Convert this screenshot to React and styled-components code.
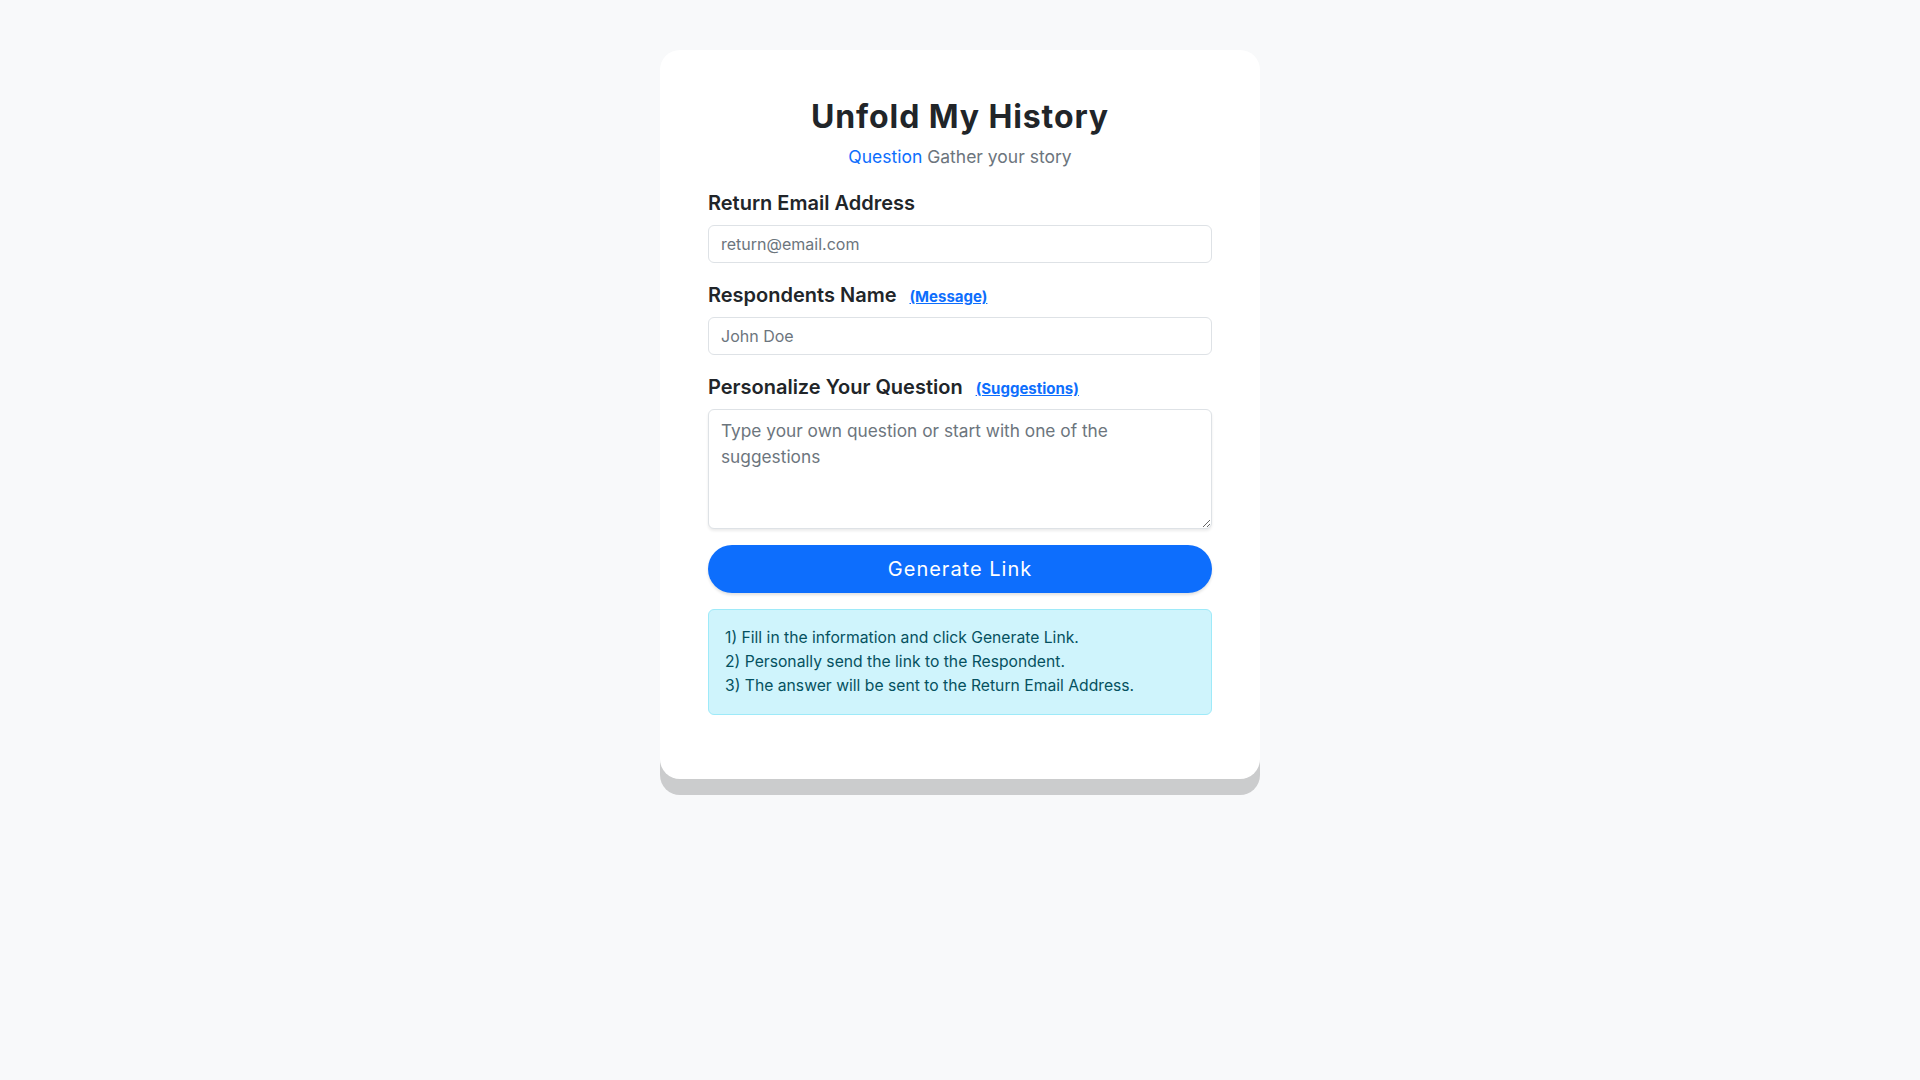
import { createGlobalStyle, styled } from "styled-components";

const GlobalStyle = createGlobalStyle`
  * { box-sizing: border-box; }
  body {
    margin: 0;
    background: #f8f9fa;
    font-family: Inter, "Noto Sans", sans-serif;
    color: #212529;
  }
`;

const Page = styled.div`
  display: flex;
  justify-content: center;
  padding-top: 50px;
  min-height: 1080px;
`;

const Card = styled.div`
  width: 600px;
  align-self: flex-start;
  background: #fff;
  border-radius: 20px;
  padding: 48px 48px 64px;
  box-shadow: 0 16px 0 #cbcccd;
`;

const Header = styled.div`
  text-align: center;
  margin-bottom: 20px;
`;

const Title = styled.h1`
  margin: 0 0 8px;
  font-size: 32px;
  line-height: 1.2;
  font-weight: 700;
  letter-spacing: 0.9px;
  color: #212529;
`;

const Subtitle = styled.p`
  margin: 0;
  font-size: 17.5px;
  line-height: 1.5;
  color: #6c757d;
`;

const Accent = styled.span`
  color: #0d6efd;
`;

const Field = styled.div`
  margin-bottom: ${(p) => (p.$last ? "16px" : "19.5px")};
`;

const Label = styled.label`
  display: flex;
  align-items: baseline;
  gap: 13px;
  margin-bottom: 10.5px;
  font-size: 20px;
  line-height: 24px;
  font-weight: 600;
  color: #212529;
`;

const HelpLink = styled.a`
  font-size: 15px;
  line-height: 1;
  font-weight: 700;
  color: #0d6efd;
  text-decoration: underline;
  cursor: pointer;
`;

const Input = styled.input`
  display: block;
  width: 100%;
  height: 38px;
  padding: 6px 12px;
  font-family: inherit;
  font-size: 16px;
  color: #212529;
  background: #fff;
  border: 1px solid #dee2e6;
  border-radius: 6px;
  outline: none;
  &::placeholder { color: #6c757d; }
`;

const TextArea = styled.textarea`
  display: block;
  width: 100%;
  height: 120px;
  padding: 8px 12px;
  font-family: inherit;
  font-size: 17.3px;
  line-height: 25.7px;
  color: #212529;
  background: #fff;
  border: 1px solid #dee2e6;
  border-radius: 6px;
  box-shadow: 0 2px 3px rgba(0, 0, 0, 0.08);
  outline: none;
  &::placeholder { color: #6c757d; }
`;

const Button = styled.button`
  display: block;
  width: 100%;
  height: 48px;
  border: none;
  border-radius: 24px;
  background: #0d6efd;
  color: #fff;
  font-family: inherit;
  font-size: 20px;
  letter-spacing: 1px;
  box-shadow: 0 2px 3px rgba(0, 0, 0, 0.12);
  cursor: pointer;
`;

const Alert = styled.div`
  margin-top: 16px;
  padding: 16px;
  background: #cff4fc;
  border: 1px solid #9eeaf9;
  border-radius: 6px;
  color: #055160;
  font-size: 15.7px;
  line-height: 24px;
`;

export default function App() {
  return (
    <>
      <GlobalStyle />
      <Page>
        <Card>
          <Header>
            <Title>Unfold My History</Title>
            <Subtitle>
              <Accent>Question</Accent> Gather your story
            </Subtitle>
          </Header>

          <Field>
            <Label>Return Email Address</Label>
            <Input placeholder="return@email.com" />
          </Field>

          <Field>
            <Label>
              Respondents Name <HelpLink>(Message)</HelpLink>
            </Label>
            <Input placeholder="John Doe" />
          </Field>

          <Field $last>
            <Label>
              Personalize Your Question <HelpLink>(Suggestions)</HelpLink>
            </Label>
            <TextArea placeholder="Type your own question or start with one of the suggestions" />
          </Field>

          <Button>Generate Link</Button>

          <Alert>
            1) Fill in the information and click Generate Link.
            <br />
            2) Personally send the link to the Respondent.
            <br />
            3) The answer will be sent to the Return Email Address.
          </Alert>
        </Card>
      </Page>
    </>
  );
}
